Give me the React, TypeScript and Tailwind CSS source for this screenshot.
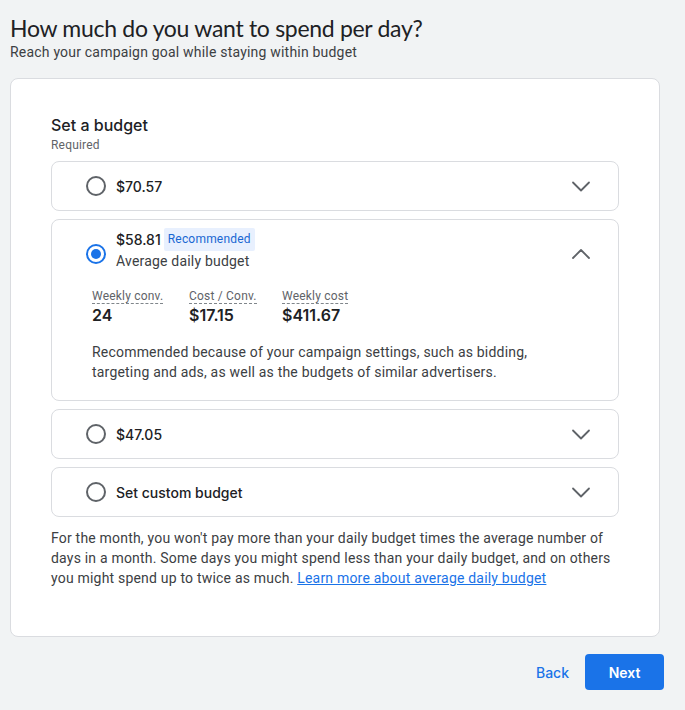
import React from "react";

const Chevron = ({ up, cls }: { up?: boolean; cls?: string }) => (
  <svg className={cls} width="24" height="24" viewBox="0 0 24 24" fill="none" stroke="#5f6368" strokeWidth="1.8" strokeLinecap="round" strokeLinejoin="round">
    {up ? <path d="M4 16l8-8 8 8" /> : <path d="M4 8.5l8 8 8-8" />}
  </svg>
);

const Radio = ({ checked, cls }: { checked?: boolean; cls?: string }) =>
  checked ? (
    <span className={`flex h-[20px] w-[20px] shrink-0 items-center justify-center rounded-full border-[2px] border-[#1a73e8] ${cls ?? ""}`}>
      <span className="h-[10px] w-[10px] rounded-full bg-[#1a73e8]" />
    </span>
  ) : (
    <span className="h-[20px] w-[20px] shrink-0 rounded-full border-[2px] border-[#5f6368]" />
  );

const Option = ({ label }: { label: string }) => (
  <div className="flex h-[50px] items-center rounded-[8px] border border-[#dadce0] pl-[34px] pr-[25px]">
    <Radio />
    <span className="ml-[10px] flex-1 text-[14px] font-medium text-[#202124]" style={{ fontFamily: "Inter, 'Open Sans', sans-serif" }}>
      {label}
    </span>
    <Chevron />
  </div>
);

const Stat = ({ label, value, w }: { label: string; value: string; w?: string }) => (
  <div className={w}>
    <div className="w-fit border-b border-dashed border-[#80868b] text-[12px] leading-[14px] tracking-[0.2px] text-[#5f6368]">{label}</div>
    <div className="text-[16px] font-semibold leading-[22px] text-[#202124]" style={{ fontFamily: "Inter, 'Open Sans', sans-serif" }}>
      {value}
    </div>
  </div>
);

export default function App() {
  return (
    <div className="min-h-[710px] bg-[#f1f3f4] px-[10px] pt-[12px] text-[#202124]" style={{ fontFamily: "Roboto, 'Liberation Sans', sans-serif" }}>
      <h1 className="text-[23px] leading-[32px] tracking-[-0.3px] text-[#202124]" style={{ fontFamily: "Lato, Roboto, sans-serif" }}>
        How much do you want to spend per day?
      </h1>
      <p className="mt-[-1px] text-[14px] leading-[18px] tracking-[0.2px] text-[#3c4043]">Reach your campaign goal while staying within budget</p>

      <div className="mt-[17px] w-[650px] rounded-[8px] border border-[#dadce0] bg-white px-[40px] pb-[48px] pt-[35px]">
        <div className="text-[16px] font-medium leading-[22px] text-[#202124]" style={{ fontFamily: "Inter, 'Open Sans', sans-serif" }}>
          Set a budget
        </div>
        <div className="mt-[1px] text-[12px] leading-[16px] tracking-[0.2px] text-[#5f6368]">Required</div>

        <div className="mt-[8px] flex flex-col gap-[8px]">
          <Option label="$70.57" />

          <div className="rounded-[8px] border border-[#dadce0] pb-[18px] pl-[34px] pr-[25px] pt-[8px]">
            <div className="flex items-center">
              <Radio checked cls="mt-[8px]" />
              <div className="ml-[10px] flex-1">
                <div className="flex items-center">
                  <span className="text-[14px] font-medium text-[#202124]" style={{ fontFamily: "Inter, 'Open Sans', sans-serif" }}>
                    $58.81
                  </span>
                  <span className="ml-[3px] rounded-[2px] bg-[#e8f0fe] px-[4px] py-[3px] text-[12px] leading-[17px] tracking-[0.2px] text-[#1967d2]">Recommended</span>
                </div>
                <div className="text-[14px] leading-[20px] tracking-[0.2px] text-[#3c4043]">Average daily budget</div>
              </div>
              <Chevron up cls="mt-[8px]" />
            </div>
            <div className="mt-[18px] flex pl-[6px]">
              <Stat label="Weekly conv." value="24" w="w-[97px]" />
              <Stat label="Cost / Conv." value="$17.15" w="w-[93px]" />
              <Stat label="Weekly cost" value="$411.67" />
            </div>
            <p className="mt-[16px] pl-[6px] text-[14px] leading-[20px] tracking-[0.2px] text-[#3c4043]">
              Recommended because of your campaign settings, such as bidding,
              <br />
              targeting and ads, as well as the budgets of similar advertisers.
            </p>
          </div>

          <Option label="$47.05" />
          <Option label="Set custom budget" />
        </div>

        <p className="mt-[11px] text-[14px] leading-[20px] tracking-[0.2px] text-[#3c4043]">
          For the month, you won't pay more than your daily budget times the average number of days in a month. Some days you might spend less than your daily budget, and on others you might spend up to twice as much.{" "}
          <a className="text-[#1a73e8] underline">Learn more about average daily budget</a>
        </p>
      </div>

      <div className="mt-[17px] flex w-[654px] items-center justify-end gap-[16px]">
        <button className="text-[14px] font-medium text-[#1a73e8]" style={{ fontFamily: "Inter, 'Open Sans', sans-serif" }}>Back</button>
        <button className="h-[36px] w-[79px] rounded-[4px] bg-[#1a73e8] text-[14px] font-semibold text-white" style={{ fontFamily: "Inter, 'Open Sans', sans-serif" }}>Next</button>
      </div>
    </div>
  );
}
